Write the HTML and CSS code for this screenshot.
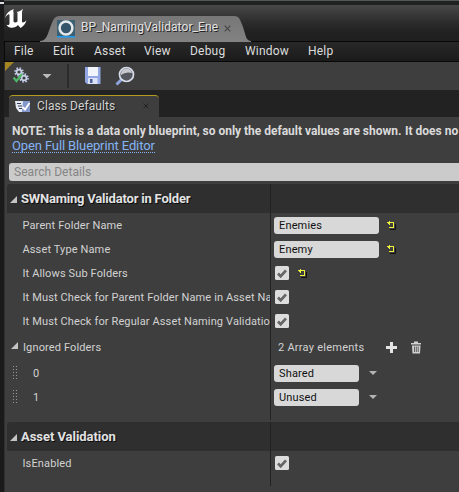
FILE: index.html
```html
<!DOCTYPE html>
<html lang="en">
<head>
<meta charset="utf-8">
<title>BP_NamingValidator_Enemy</title>
<link rel="stylesheet" href="styles.css">
</head>
<body>
<svg width="0" height="0" class="defs">
  <defs>
    <symbol id="check" viewBox="0 0 14 14"><path d="M3 7.500 L5.700 10.200 L11 4.300" fill="none" stroke="#666" stroke-width="2.7"/></symbol>
    <symbol id="reset" viewBox="0 0 9 9"><path d="M3 8.500H8.500V3" fill="none" stroke="#111" stroke-width="1"/><path d="M0 1H2V0H3V1H7V7H2V6H6V2H3V4H2V3H1V2H0z" fill="#eff23a"/></symbol>
    <symbol id="gear" viewBox="0 0 12 12"><circle cx="6" cy="6" r="4.800" fill="none" stroke="#b9c2e0" stroke-width="2" stroke-dasharray="2 1.770"/><circle cx="6" cy="6" r="2.900" fill="none" stroke="#cbd3ea" stroke-width="2"/></symbol>
  </defs>
</svg>
<div class="edge"></div>
<div class="window">
  <header class="titlebar">
    <svg class="logo" width="24" height="22" viewBox="0 0 24 22"><path fill="#fff" d="M0 11 C1 7 4 3.500 9 2 C8 3.500 8 4 8.500 5 V14.500 C9.500 16 11 15.700 12.500 14.500 V6.500 C12.500 5 12 5 11 5 C14 4.800 16 3.500 18 1.700 C17 4 17 5 17 7 V14.500 C17 16 19 16 21.500 13.300 C20.500 17 18.500 19 15.500 21 L13 18 C11 20.500 8 21 5 20.500 C3 20 2 18.800 1.500 17.500 C3 18.500 4.500 18 4.500 16.500 V8 C4.500 6.500 2 7.500 0 11Z"/></svg>
    <div class="doc-tab">
      <svg class="tab-shape" width="211" height="26" viewBox="0 0 211 26"><defs><linearGradient id="tg" x2="0" y2="1"><stop stop-color="#777"/><stop offset="1" stop-color="#828282"/></linearGradient></defs><path fill="url(#tg)" d="M0 25 C6 25 7 20 10 12 C13 4 14 0 20 0 H194 C199 0 200 3 203 11 C206 20 206 25 211 25 V26 H0Z"/></svg>
      <svg class="doc-icon" width="18" height="18" viewBox="0 0 18 18"><path fill="#3b6073" d="M0 0H18V16H0z"/><path fill="#1b9cf3" d="M0 16H18V17.500H0z"/><circle cx="9" cy="8" r="6.400" fill="#35566a" stroke="#e4e8ea" stroke-width="2.500"/></svg>
      <span class="doc-name">BP_NamingValidator_Ene</span>
      <svg class="doc-close" width="7" height="7" viewBox="0 0 7 7"><path d="M.7 .7L6.300 6.300M6.300 .7L.7 6.300" stroke="#454545" stroke-width="1.100"/></svg>
    </div>
  </header>
  <nav class="menu"><span class="m1">File</span><span class="m2">Edit</span><span class="m3">Asset</span><span class="m4">View</span><span class="m5">Debug</span><span class="m6">Window</span><span>Help</span></nav>
  <div class="toolbar">
    <svg width="140" height="28" viewBox="0 0 140 28">
      <path fill="#a48623" d="M0 0H9L0 9z"/>
      <use href="#gear" x="9" y="5" width="10" height="10"/><use href="#gear" x="14" y="11" width="10" height="10"/>
      <path d="M8.500 15.500L11.500 19L17 12" fill="none" stroke="#4fb768" stroke-width="2.200"/>
      <path fill="#bbb" d="M37.500 12H46.500L42 16.500z"/>
      <path fill="#2c2c2c" d="M62 2H64V26H62z"/>
      <path fill="#92a7e3" d="M80 5H95.500V22H82L80 20z"/><path fill="#f2f4fb" d="M83 5H93V14H83z"/><path fill="#dce2f5" d="M83 16H92.500V22H83z"/><path fill="#4d5f99" d="M85 17H87.500V21H85z"/>
      <path d="M111.500 22.500L117 17" stroke="#8fa4dc" stroke-width="3"/><circle cx="121.500" cy="12.500" r="7" fill="#55585e" stroke="#d8ddec" stroke-width="1.700"/><path d="M116 13C115.500 5 126 4.500 127 11C123 9.500 119 11 116 13" fill="#c8cad0"/>
    </svg>
  </div>
  <div class="panel-tabs">
    <div class="panel-tab">
      <svg width="16" height="13" viewBox="0 0 16 13"><path fill="#e5e9f2" d="M0 1H15V12H4L1 8z"/><path fill="#8298cd" d="M8 1H15V12H7z"/><path d="M2 3.500H6M3 6H7M4 8.500H7" stroke="#333d55" stroke-width="1"/><path d="M7.500 7L10 9.500L14.500 3" stroke="#fff" stroke-width="1.800" fill="none"/></svg>
      <span>Class Defaults</span>
      <svg class="panel-close" width="6" height="6" viewBox="0 0 6 6"><path d="M.5 .5L5.500 5.500M5.500 .5L.5 5.500" stroke="#222"/></svg>
    </div>
  </div>
  <main class="details">
    <div class="note"><span class="n1">NOTE: This is a data only blueprint, so only the default values are shown.</span><span>It does no</span></div>
    <div class="link-row"><a class="link">Open Full Blueprint Editor</a></div>
    <div class="search">Search Details</div>
    <section class="category">
      <h2><i class="arrow"></i><span class="c1">SWNaming Validator in Folder</span></h2>
      <div class="row"><div class="label">Parent Folder Name</div><div class="value"><span class="input">Enemies</span><svg class="reset" width="9" height="9"><use href="#reset"/></svg></div></div>
      <div class="row"><div class="label">Asset Type Name</div><div class="value"><span class="input">Enemy</span><svg class="reset" width="9" height="9"><use href="#reset"/></svg></div></div>
      <div class="row"><div class="label">It Allows Sub Folders</div><div class="value"><svg class="box" width="14" height="14"><use href="#check"/></svg><svg class="reset after-box" width="9" height="9"><use href="#reset"/></svg></div></div>
      <div class="row"><div class="label">It Must Check for Parent Folder Name in Asset Name</div><div class="value"><svg class="box" width="14" height="14"><use href="#check"/></svg></div></div>
      <div class="row"><div class="label">It Must Check for Regular Asset Naming Validation</div><div class="value"><svg class="box" width="14" height="14"><use href="#check"/></svg></div></div>
      <div class="row array"><div class="label parent"><i class="arrow"></i>Ignored Folders</div><div class="value"><span class="count">2 Array elements</span><svg class="tools" width="36" height="13" viewBox="0 0 36 13"><path fill="#e4e4e4" d="M4 1H7V5H11V8H7V12H4V8H0V5H4z"/><path fill="#d0d0d0" d="M25 2H28V.5H32V2H35V3.500H25zM26 4.500H34.500L34 12.500H26.500z"/><path d="M28.500 5.500V11M30.300 5.500V11M32.200 5.500V11" stroke="#424242" stroke-width=".8"/></svg></div></div>
      <div class="row"><div class="label item"><i class="grip"></i>0</div><div class="value"><span class="input short">Shared</span><i class="drop"></i></div></div>
      <div class="row"><div class="label item"><i class="grip"></i>1</div><div class="value"><span class="input short">Unused</span><i class="drop"></i></div></div>
      <div class="row tail"><div class="label"></div><div class="value"></div></div>
    </section>
    <section class="category">
      <h2><i class="arrow"></i><span class="c2">Asset Validation</span></h2>
      <div class="row"><div class="label">IsEnabled</div><div class="value"><svg class="box" width="14" height="14"><use href="#check"/></svg></div></div>
      <div class="row tail"><div class="label"></div><div class="value"></div></div>
    </section>
  </main>
</div>
</body>
</html>
```
FILE: styles.css
```css
* { box-sizing: border-box; }
body { margin: 0; width: 459px; height: 492px; overflow: hidden; display: flex; background: #1c1c1c; font: 12px Roboto, sans-serif; color: #d2d2d2; }
span, a, .label { white-space: nowrap; }
.defs { position: absolute; }
svg { display: block; flex: none; }
.edge { width: 4px; flex: none; border-top: 2px solid #dcdce4; margin-top: 2px; background: #1a1a1a; }
.window { width: 455px; flex: none; border-top: 1px solid #555858; overflow: hidden; display: flex; flex-direction: column; }
.titlebar { height: 40px; flex: none; display: flex; align-items: flex-end; border-top: 4px solid #202222; background: linear-gradient(#484848, #2b2b2b 50%, #202020 80%); }
.logo { margin: 0 0 12px 1px; }
.doc-tab { width: 211px; height: 25px; margin-left: 11px; display: flex; align-items: center; position: relative; padding-left: 17px; }
.tab-shape { position: absolute; left: 0; top: 0; }
.doc-icon, .doc-name, .doc-close { position: relative; }
.doc-name { margin: -3px 0 0 6px; width: 143px; text-shadow: 1px 1px #222; color: #e2e2e2; letter-spacing: .08px; }
.menu { height: 21px; flex: none; display: flex; gap: 20px; align-items: center; padding: 0 0 1px 9px; border: solid #080808; border-width: 1px 0 1px 1px; background: linear-gradient(#282828, #1b1b1b); color: #ddd; letter-spacing: .2px; }
.m1 { width: 19px; }
.m2 { width: 21px; }
.m3 { width: 30px; }
.m4 { width: 26px; }
.m5 { width: 35px; }
.m6 { width: 43px; }
.toolbar { height: 28px; flex: none; background: #3e3e3e; border-left: 1px solid #303030; }
.panel-tabs { height: 27px; flex: none; background: #222; padding: 5px 0 0 5px; }
.panel-tab { width: 150px; height: 22px; display: flex; align-items: center; gap: 6px; padding: 0 10px 1px 6px; border-top: 1px solid #b39a20; border-radius: 4px 4px 0 0; background: #3e3e3e; text-shadow: 1px 1px #151515; letter-spacing: .08px; }
.panel-close { margin-left: auto; }
.details { flex: 1; background: #3e3e3e; border-left: 1px solid #303030; padding: 6px 0 0 3px; }
.note { height: 16px; line-height: 16px; margin-left: 4px; font-weight: 700; color: #dadada; display: flex; }
.n1 { width: 393px; flex: none; letter-spacing: -.02px; }
.link-row { height: 24px; padding-left: 4px; display: flex; align-items: flex-start; }
.link { height: 14px; line-height: 13px; color: #84b4f4; border-bottom: 1px dotted #84b4f4; font-size: 13px; letter-spacing: -.12px; }
.search { height: 18px; margin-left: 1px; border-radius: 3px 0 0 3px; padding-left: 5px; background: #cbcbcb; color: #858585; line-height: 18px; letter-spacing: .05px; margin-bottom: 3px; }
h2 { margin: 0 0 0 -1px; height: 29px; font-size: 13px; font-weight: 700; display: flex; align-items: center; border-radius: 3px 0 0 0; color: #e2e2e2; text-shadow: 1px 1px #0c0c0c; background: linear-gradient(90deg, transparent 263px, #212121 263px 264px, transparent 264px), #2f2f2f; }
.c1 { letter-spacing: -.2px; }
.c2 { letter-spacing: -.05px; }
.category + .category { margin-top: 2px; }
.arrow { width: 0; height: 0; border: 0 solid transparent; border-left-width: 7px; border-bottom: 7px solid #c4c4c4; flex: none; }
h2 .arrow { margin: 1px 4px 0 3px; }
.row { display: flex; height: 24px; font-size: 11px; }
.label { width: 262px; flex: none; overflow: hidden; padding-left: 14.5px; display: flex; align-items: center; letter-spacing: .13px; }
.value { flex: 1; border-left: 1px solid #222; padding-left: 3px; display: flex; align-items: center; }
.input { width: 105px; height: 17px; line-height: 17px; border-radius: 3px; padding-left: 5px; background: #d8d8d8; color: #111; letter-spacing: .15px; }
.input.short { width: 85px; }
.box { background: #ddd; border-radius: 1.5px; margin-left: 1px; }
.reset { margin-left: 8px; }
.reset.after-box { margin-left: 9px; }
.array { height: 28px; }
.label.parent { padding-left: 3px; }
.parent .arrow { margin: -3px 5px 0 0; }
.count { width: 109px; padding-left: 4px; letter-spacing: .25px; }
.tools { margin-left: 3px; }
.label.item { padding-left: 5px; }
.grip { width: 5px; height: 14px; margin-right: 15px; background: repeating-linear-gradient(transparent 0 1px, #3e3e3e 1px 3px), linear-gradient(90deg, #999 1px, transparent 1px 3px, #999 3px 4px, transparent 4px); }
.drop { border: 4px solid transparent; border-top-color: #b4b4b4; border-bottom: 0; margin-left: 10px; }
.tail { height: 11px; }
```
